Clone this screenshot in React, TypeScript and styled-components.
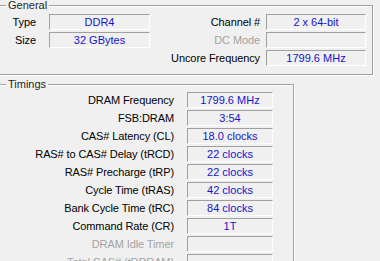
import React from "react";
import styled, { createGlobalStyle } from "styled-components";

const Global = createGlobalStyle`
  html, body { margin: 0; padding: 0; background: #f0f0f0; overflow: hidden; }
  body { font-family: "Liberation Sans", Arial, sans-serif; font-size: 11px; }
`;

const Page = styled.div`
  width: 380px;
  height: 261px;
  overflow: hidden;
  background: #f0f0f0;
`;

const Group = styled.fieldset<{ $w: number }>`
  margin: 0 0 0 -10px;
  padding: 0;
  width: ${(p) => p.$w}px;
  box-sizing: border-box;
  border: 1px solid #a0a0a0;
  box-shadow: inset 1px 1px 0 #fff, 1px 1px 0 #fff;
  min-inline-size: 0;
  & + & { margin-top: 4px; }
`;

const Legend = styled.legend`
  margin-left: 15px;
  padding: 0 2px;
  line-height: 10px;
  height: 10px;
  color: #1e1e1e;
`;

const Body = styled.div<{ $pt: number; $pb: number }>`
  padding: ${(p) => p.$pt}px 0 ${(p) => p.$pb}px 9px;
  display: flex;
`;

const Grid = styled.div<{ $cols: string; $gap: number }>`
  display: grid;
  grid-template-columns: ${(p) => p.$cols};
  grid-auto-rows: 16px;
  column-gap: ${(p) => p.$gap}px;
  row-gap: 2px;
  align-content: start;
`;

const Label = styled.div<{ $off?: boolean }>`
  text-align: right;
  white-space: nowrap;
  line-height: 16px;
  letter-spacing: -0.1px;
  color: ${(p) => (p.$off ? "#a3a3a3" : "#000")};
`;

const Field = styled.div`
  box-sizing: border-box;
  height: 16px;
  border-top: 1px solid #a0a0a0;
  border-left: 1px solid #a0a0a0;
  border-bottom: 1px solid #fff;
  border-right: 1px solid #fff;
  color: #1414c8;
  text-align: center;
  line-height: 14px;
  white-space: nowrap;
  overflow: hidden;
`;

type Row = [string, string, boolean?];

const generalLeft: Row[] = [
  ["Type", "DDR4"],
  ["Size", "32 GBytes"],
];
const generalRight: Row[] = [
  ["Channel #", "2 x 64-bit"],
  ["DC Mode", "", true],
  ["Uncore Frequency", "1799.6 MHz"],
];
const timings: Row[] = [
  ["DRAM Frequency", "1799.6 MHz"],
  ["FSB:DRAM", "3:54"],
  ["CAS# Latency (CL)", "18.0 clocks"],
  ["RAS# to CAS# Delay (tRCD)", "22 clocks"],
  ["RAS# Precharge (tRP)", "22 clocks"],
  ["Cycle Time (tRAS)", "42 clocks"],
  ["Bank Cycle Time (tRC)", "84 clocks"],
  ["Command Rate (CR)", "1T"],
  ["DRAM Idle Timer", "", true],
  ["Total CAS# (tRDRAM)", "", true],
];

const rows = (list: Row[]) =>
  list.map(([l, v, off]) => (
    <React.Fragment key={l}>
      <Label $off={off}>{l}</Label>
      <Field>{v}</Field>
    </React.Fragment>
  ));

export default function App() {
  return (
    <Page>
      <Global />
      <Group $w={383}>
        <Legend>General</Legend>
        <Body $pt={4} $pb={8}>
          <Grid $cols="36px 101px" $gap={13}>{rows(generalLeft)}</Grid>
          <Grid $cols="110px 100px" $gap={6}>{rows(generalRight)}</Grid>
        </Body>
      </Group>
      <Group $w={304}>
        <Legend>Timings</Legend>
        <Body $pt={3} $pb={8}>
          <Grid $cols="174px 86px" $gap={13}>{rows(timings)}</Grid>
        </Body>
      </Group>
    </Page>
  );
}
